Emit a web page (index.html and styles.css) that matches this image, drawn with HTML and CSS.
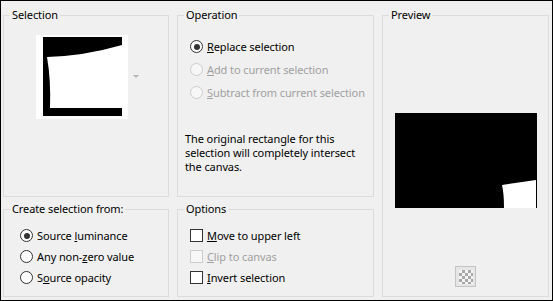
FILE: index.html
```html
<!DOCTYPE html>
<html lang="en">
<head>
  <meta charset="UTF-8" />
  <title>Selection From Mask</title>
  <link rel="stylesheet" href="styles.css">
</head>
<body>
  <div class="dialog">
    <fieldset class="group group-selection">
      <legend>Selection</legend>
      <div class="thumb-row">
        <svg class="thumb" width="92" height="84" viewBox="0 0 92 84">
          <rect x="0" y="0" width="92" height="84" fill="#fff"/>
          <rect x="7" y="2" width="79" height="79" fill="#000"/>
          <path d="M11 22 Q48 21 86 10 L86 73 L14 73 Q15 45 11 22 Z" fill="#fff"/>
        </svg>
        <span class="drop-arrow"></span>
      </div>
    </fieldset>

    <fieldset class="group group-operation">
      <legend>Operation</legend>
      <div class="options">
        <div class="option"><span class="radio checked"></span><span><u>R</u>eplace selection</span></div>
        <div class="option disabled"><span class="radio"></span><span><u>A</u>dd to current selection</span></div>
        <div class="option disabled"><span class="radio"></span><span><u>S</u>ubtract from current selection</span></div>
      </div>
      <p class="note">The original rectangle for this<br>selection will completely intersect<br>the canvas.</p>
    </fieldset>

    <fieldset class="group group-preview">
      <legend>Preview</legend>
      <svg class="preview" width="142" height="95" viewBox="0 0 142 95">
        <rect x="0" y="0" width="142" height="95" fill="#000"/>
        <path d="M107 72 L141 67 L141 95 L109 95 Q109 80 107 72 Z" fill="#fff"/>
      </svg>
      <button class="checker-btn" type="button">
        <span class="checker"></span>
      </button>
    </fieldset>

    <fieldset class="group group-source">
      <legend>Create selection from:</legend>
      <div class="options tight">
        <div class="option"><span class="radio checked"></span><span>Source <u>l</u>uminance</span></div>
        <div class="option"><span class="radio"></span><span>Any non-<u>z</u>ero value</span></div>
        <div class="option"><span class="radio"></span><span>S<u>o</u>urce opacity</span></div>
      </div>
    </fieldset>

    <fieldset class="group group-options">
      <legend>Options</legend>
      <div class="options tight">
        <div class="option"><span class="check"></span><span><u>M</u>ove to upper left</span></div>
        <div class="option disabled"><span class="check"></span><span><u>C</u>lip to canvas</span></div>
        <div class="option"><span class="check"></span><span><u>I</u>nvert selection</span></div>
      </div>
    </fieldset>
  </div>
</body>
</html>
```

FILE: styles.css
```css
html, body {
  margin: 0;
  padding: 0;
  background-color: #f0f0f0;
}
body {
  font-family: "Noto Sans", "Open Sans", sans-serif;
  font-size: 11px;
  letter-spacing: -0.1px;
  color: #000;
}
.dialog {
  width: 553px;
  height: 301px;
  box-sizing: border-box;
  border: 1px solid #000;
  background-color: #f0f0f0;
  padding: 7px 3px 3px 2px;
  display: grid;
  grid-template-columns: 166px 197px 167px;
  grid-template-rows: 189px 95px;
  column-gap: 8px;
  row-gap: 5px;
}
.group {
  margin: 0;
  padding: 0 6px 6px 6px;
  border: 1px solid #dcdcdc;
  min-width: 0;
}
.group legend {
  padding: 0 2px;
  line-height: 14px;
  height: 14px;
}
.group-selection { grid-column: 1; grid-row: 1; }
.group-operation { grid-column: 2; grid-row: 1; }
.group-preview {
  grid-column: 3;
  grid-row: 1 / span 2;
  display: flex;
  flex-direction: column;
  align-items: center;
}
.group-source { grid-column: 1; grid-row: 2; }
.group-options { grid-column: 2; grid-row: 2; }

.thumb-row {
  display: flex;
  align-items: center;
  margin-top: 13px;
  margin-left: 26px;
}
.thumb {
  display: block;
}
.drop-arrow {
  width: 0;
  height: 0;
  margin-left: 5px;
  margin-top: -1px;
  border-left: 3px solid transparent;
  border-right: 3px solid transparent;
  border-top: 3px solid #b4b4b4;
}

.options {
  margin-top: 13px;
  margin-left: 6px;
}
.option {
  display: flex;
  align-items: center;
  height: 23px;
  gap: 4px;
  white-space: nowrap;
}
.options.tight {
  margin-top: 9px;
}
.group-source .options.tight {
  margin-left: 10px;
}
.options.tight .option {
  height: 21px;
}
.option.disabled {
  color: #a0a0a0;
}
.radio {
  width: 11px;
  height: 11px;
  border: 1px solid #333;
  border-radius: 50%;
  background-color: #fff;
  position: relative;
  flex: none;
}
.radio.checked::after {
  content: "";
  position: absolute;
  left: 2.5px;
  top: 2.5px;
  width: 6px;
  height: 6px;
  border-radius: 50%;
  background-color: #333;
}
.check {
  width: 11px;
  height: 11px;
  border: 1px solid #333;
  background-color: #fff;
  flex: none;
}
.disabled .radio,
.disabled .check {
  border-color: #cccccc;
  background-color: #f7f7f7;
}
.note {
  margin: 28px 0 0 1px;
  line-height: 14px;
  white-space: nowrap;
}

.preview {
  display: block;
  margin-top: 91px;
}
.checker-btn {
  margin-top: 58px;
  width: 21px;
  height: 21px;
  padding: 0;
  border: 1px solid #c4c4c4;
  background-color: #e6e6e6;
  display: flex;
  align-items: center;
  justify-content: center;
}
.checker {
  width: 14px;
  height: 14px;
  background-color: #f4f4f4;
  background-image:
    linear-gradient(45deg, #a8a8a8 25%, transparent 25%, transparent 75%, #a8a8a8 75%),
    linear-gradient(45deg, #a8a8a8 25%, transparent 25%, transparent 75%, #a8a8a8 75%);
  background-size: 6px 6px;
  background-position: 0 0, 3px 3px;
}
```
